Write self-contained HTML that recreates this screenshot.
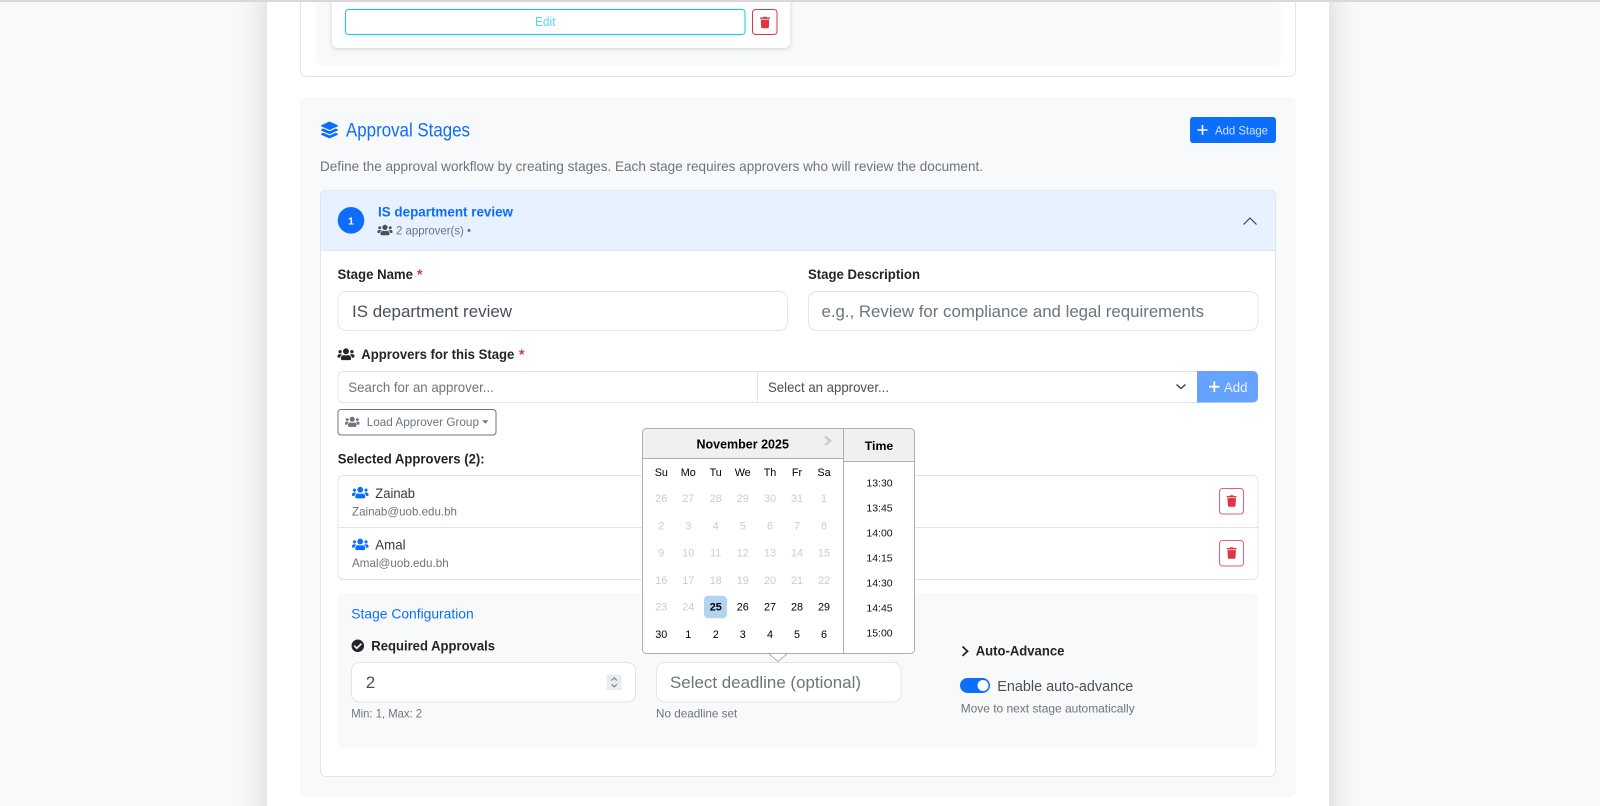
<!DOCTYPE html>
<html lang="en">
<head>
<meta charset="utf-8">
<title>Approval Stages</title>
<style>
html,body{margin:0;padding:0;width:1600px;height:806px;overflow:hidden;background:#f8f9fa}
#wrap{position:relative;width:1600px;height:806px;overflow:hidden;background:#f8f9fa}
#topline{position:absolute;left:0;top:0;width:1600px;height:1.5px;background:#d8d8d8;z-index:3}
#main{position:absolute;left:267px;top:-20px;width:1062px;height:860px;background:#fff;box-shadow:0 0 30px rgba(0,0,0,.16)}
svg#page{position:absolute;left:0;top:0;z-index:2;filter:blur(.3px)}
text{font-family:"Liberation Sans",sans-serif}
.b{font-weight:700}
.c{text-anchor:middle}
.g{fill:#6c757d}
.d{fill:#212529}
.m{fill:#495057}
.day{font-size:10.8px;fill:#000;text-anchor:middle}
.off{font-size:10.8px;fill:#ccc;text-anchor:middle}
.tm{font-size:10.5px;fill:#111;text-anchor:middle}
</style>
</head>
<body>
<div id="wrap">
<div id="main"></div>
<div id="topline"></div>
<svg id="page" width="1600" height="806" viewBox="0 0 1600 806" xmlns="http://www.w3.org/2000/svg">
<defs>
<symbol id="users" viewBox="0 0 640 512"><path fill="currentColor" d="M96 224c35.3 0 64-28.7 64-64s-28.7-64-64-64-64 28.7-64 64 28.7 64 64 64zm448 0c35.3 0 64-28.7 64-64s-28.7-64-64-64-64 28.7-64 64 28.7 64 64 64zm32 32h-64c-17.6 0-33.5 7.1-45.1 18.6 40.3 22.1 68.9 62 75.1 109.4h66c17.7 0 32-14.3 32-32v-32c0-35.3-28.7-64-64-64zm-256 0c61.9 0 112-50.1 112-112S381.9 32 320 32 208 82.1 208 144s50.1 112 112 112zm76.8 32h-8.3c-20.8 10-43.9 16-68.5 16s-47.6-6-68.5-16h-8.3C179.6 288 128 339.6 128 403.2V432c0 26.5 21.5 48 48 48h288c26.5 0 48-21.5 48-48v-28.8c0-63.6-51.6-115.2-115.2-115.2zm-223.7-13.4C161.5 263.1 145.6 256 128 256H64c-35.3 0-64 28.7-64 64v32c0 17.7 14.3 32 32 32h65.9c6.3-47.4 34.9-87.3 75.2-109.4z"/></symbol>
<symbol id="layers" viewBox="0 0 512 512"><path fill="currentColor" d="M12.41 148.02l232.94 105.67c6.8 3.09 14.49 3.09 21.29 0l232.94-105.67c16.55-7.51 16.55-32.52 0-40.03L266.65 2.31a25.607 25.607 0 0 0-21.29 0L12.41 107.98c-16.55 7.51-16.55 32.53 0 40.04zm487.18 88.28l-58.09-26.33-161.64 73.27c-7.56 3.43-15.59 5.17-23.86 5.17s-16.29-1.74-23.86-5.17L70.51 209.97l-58.1 26.33c-16.55 7.5-16.55 32.5 0 40l232.94 105.59c6.8 3.08 14.49 3.08 21.29 0L499.59 276.3c16.55-7.5 16.55-32.5 0-40zm0 127.8l-57.87-26.23-161.86 73.37c-7.56 3.43-15.59 5.17-23.86 5.17s-16.29-1.74-23.86-5.17L70.29 337.87 12.41 364.1c-16.55 7.5-16.55 32.5 0 40l232.94 105.59c6.8 3.08 14.49 3.08 21.29 0L499.59 404.1c16.55-7.5 16.55-32.5 0-40z"/></symbol>
<symbol id="trash" viewBox="0 0 448 512"><path fill="currentColor" d="M432 32H312l-9.4-18.7A24 24 0 0 0 281.1 0H166.8a23.72 23.72 0 0 0-21.4 13.3L136 32H16A16 16 0 0 0 0 48v32a16 16 0 0 0 16 16h416a16 16 0 0 0 16-16V48a16 16 0 0 0-16-16zM53.2 467a48 48 0 0 0 47.9 45h245.8a48 48 0 0 0 47.9-45L416 128H32z"/></symbol>
<symbol id="check" viewBox="0 0 512 512"><path fill="currentColor" d="M504 256c0 136.967-111.033 248-248 248S8 392.967 8 256 119.033 8 256 8s248 111.033 248 248zM227.314 387.314l184-184c6.248-6.248 6.248-16.379 0-22.627l-22.627-22.627c-6.248-6.249-16.379-6.249-22.628 0L216 308.118l-70.059-70.059c-6.248-6.248-16.379-6.248-22.628 0l-22.627 22.627c-6.248 6.248-6.248 16.379 0 22.627l104 104c6.249 6.249 16.379 6.249 22.628 0z"/></symbol>
</defs>

<!-- top card remnants -->
<rect x="300.5" y="-20" width="995" height="96.5" rx="6" fill="#fff" stroke="#e2e5e8"/>
<rect x="317" y="-20" width="962" height="83" rx="6" fill="#f8f9fa" style="filter:drop-shadow(0 1px 2px rgba(0,0,0,.05))"/>
<rect x="332" y="-20" width="458" height="68" rx="6" fill="#fff" style="filter:drop-shadow(0 1px 2.5px rgba(0,0,0,.16))"/>
<rect x="345.5" y="9.5" width="399.5" height="25" rx="3" fill="#fff" stroke="#0dcaf0"/>
<text x="535" y="26" font-size="12.5" fill="#5ad6f2" textLength="20.5" lengthAdjust="spacingAndGlyphs">Edit</text>
<rect x="752.5" y="9.5" width="24.5" height="25" rx="3" fill="#fff" stroke="#dc3545"/>
<use href="#trash" x="760" y="16.5" width="10" height="12" color="#dc3545"/>

<!-- approval section -->
<rect x="300" y="97" width="996" height="700" rx="6" fill="#f8f9fa"/>
<use href="#layers" x="321" y="121.5" width="17" height="17" color="#0d6efd"/>
<text x="346" y="136.5" font-size="19" fill="#0d6efd" textLength="124" lengthAdjust="spacingAndGlyphs">Approval Stages</text>
<rect x="1190" y="117" width="86" height="26" rx="3" fill="#0d6efd"/>
<path d="M1197.500 130h10M1202.500 125v10" stroke="#fff" stroke-width="1.600" fill="none"/>
<text x="1215" y="134.300" font-size="12" fill="#cfe2ff" textLength="53" lengthAdjust="spacingAndGlyphs">Add Stage</text>
<text x="320" y="171" font-size="14" class="g" textLength="663" lengthAdjust="spacingAndGlyphs">Define the approval workflow by creating stages. Each stage requires approvers who will review the document.</text>

<!-- accordion card -->
<rect x="320.500" y="190.500" width="955" height="586" rx="5" fill="#fff" stroke="#e2e5e8"/>
<path d="M321 250V195a4.500 4.500 0 0 1 4.500-4.500H1270.500a4.500 4.500 0 0 1 4.500 4.500V250z" fill="#e7f1ff"/>
<path d="M320.500 250.500H1275.500" stroke="#e2e5e8"/>
<circle cx="351" cy="220.300" r="13.300" fill="#0d6efd"/>
<text x="351" y="224.300" font-size="10.500" fill="#fff" class="b c">1</text>
<text x="378" y="216.300" font-size="14" fill="#0d6efd" class="b" textLength="135" lengthAdjust="spacingAndGlyphs">IS department review</text>
<use href="#users" x="377.500" y="224" width="15" height="12" color="#495057"/>
<text x="396" y="234.300" font-size="12" class="g" textLength="75" lengthAdjust="spacingAndGlyphs">2 approver(s) •</text>
<path d="M1243.500 224.500L1250 218l6.500 6.500" stroke="#1f3a68" stroke-width="1.100" fill="none"/>

<!-- stage name / description -->
<text x="337.500" y="279" font-size="14" class="b d" textLength="75.500" lengthAdjust="spacingAndGlyphs">Stage Name</text>
<text x="417" y="279" font-size="14" fill="#dc3545" class="b">*</text>
<rect x="338" y="291.500" width="449.500" height="39" rx="8" fill="#fff" stroke="#e2e5e8"/>
<text x="352" y="317" font-size="17" class="m" textLength="160" lengthAdjust="spacingAndGlyphs">IS department review</text>
<text x="808" y="279" font-size="14" class="b d" textLength="112" lengthAdjust="spacingAndGlyphs">Stage Description</text>
<rect x="808.500" y="291.500" width="449.500" height="39" rx="8" fill="#fff" stroke="#e2e5e8"/>
<text x="821.500" y="317" font-size="17" class="g" textLength="382.500" lengthAdjust="spacingAndGlyphs">e.g., Review for compliance and legal requirements</text>

<!-- approvers -->
<use href="#users" x="337.500" y="347.500" width="17" height="13.500" color="#212529"/>
<text x="361.300" y="359" font-size="14" class="b d" textLength="153" lengthAdjust="spacingAndGlyphs">Approvers for this Stage</text>
<text x="519" y="359" font-size="14" fill="#dc3545" class="b">*</text>
<rect x="338" y="371.500" width="880" height="31" rx="5" fill="#fff" stroke="#e2e5e8"/>
<path d="M757.500 371.500V402.500" stroke="#e2e5e8"/>
<text x="348.300" y="392" font-size="14" class="g" textLength="145.500" lengthAdjust="spacingAndGlyphs">Search for an approver...</text>
<text x="768" y="392" font-size="14" class="m" textLength="121" lengthAdjust="spacingAndGlyphs">Select an approver...</text>
<path d="M1176.500 384.500l4.500 4 4.500-4" stroke="#343a40" stroke-width="1.300" fill="none"/>
<path d="M1197 371h56a5 5 0 0 1 5 5v21.500a5 5 0 0 1-5 5h-56z" fill="#66a3ff"/>
<path d="M1209 386.700h10.500M1214.300 381.500v10.500" stroke="#fff" stroke-width="1.800" fill="none"/>
<text x="1224" y="392" font-size="14" fill="#e8f1ff" textLength="23.500" lengthAdjust="spacingAndGlyphs">Add</text>

<rect x="338" y="409.500" width="158" height="25.500" rx="3" fill="#fff" stroke="#6c757d"/>
<use href="#users" x="345" y="416" width="14.500" height="11.600" color="#6c757d"/>
<text x="366.700" y="426" font-size="12" class="g" textLength="112.300" lengthAdjust="spacingAndGlyphs">Load Approver Group</text>
<path d="M482.300 420.300h6l-3 3.400z" fill="#6c757d"/>

<text x="337.700" y="463.500" font-size="14" class="b d" textLength="147" lengthAdjust="spacingAndGlyphs">Selected Approvers (2):</text>

<!-- list -->
<rect x="338" y="475.500" width="920" height="104" rx="5" fill="#fff" stroke="#e2e5e8"/>
<path d="M338 527.500H1258" stroke="#e2e5e8"/>
<use href="#users" x="352" y="486" width="16.500" height="13.300" color="#0d6efd"/>
<text x="375.300" y="498" font-size="14" fill="#343a40" textLength="39.700" lengthAdjust="spacingAndGlyphs">Zainab</text>
<text x="352" y="515.300" font-size="12" class="g" textLength="105" lengthAdjust="spacingAndGlyphs">Zainab@uob.edu.bh</text>
<use href="#users" x="352" y="537.700" width="16.500" height="13.300" color="#0d6efd"/>
<text x="375.300" y="549.700" font-size="14" fill="#343a40" textLength="30.300" lengthAdjust="spacingAndGlyphs">Amal</text>
<text x="352" y="567" font-size="12" class="g" textLength="96.700" lengthAdjust="spacingAndGlyphs">Amal@uob.edu.bh</text>
<rect x="1219.500" y="488.500" width="24" height="25.500" rx="3" fill="#fff" stroke="#e4606d"/>
<use href="#trash" x="1226.700" y="495" width="10" height="12" color="#dc3545"/>
<rect x="1219.500" y="540.500" width="24" height="25.500" rx="3" fill="#fff" stroke="#e4606d"/>
<use href="#trash" x="1226.700" y="547" width="10" height="12" color="#dc3545"/>

<!-- configuration -->
<rect x="337.500" y="593.500" width="920.500" height="155" rx="5" fill="#f8f9fa"/>
<text x="351.300" y="618.700" font-size="14" fill="#0d6efd" textLength="122.400" lengthAdjust="spacingAndGlyphs">Stage Configuration</text>
<use href="#check" x="351.300" y="639.300" width="13" height="13" color="#212529"/>
<text x="371.300" y="650.700" font-size="14" class="b d" textLength="123.700" lengthAdjust="spacingAndGlyphs">Required Approvals</text>
<rect x="351.500" y="662.500" width="284" height="39.500" rx="8" fill="#fff" stroke="#e2e5e8"/>
<text x="365.700" y="688" font-size="17" class="m">2</text>
<rect x="606.700" y="674.700" width="15" height="15.300" fill="#e9ecef"/>
<path d="M611.500 680.500l2.700-2.700 2.700 2.700M611.500 684.200l2.700 2.700 2.700-2.700" stroke="#6c757d" fill="none"/>
<text x="351.300" y="717.700" font-size="12" class="g" textLength="70.700" lengthAdjust="spacingAndGlyphs">Min: 1, Max: 2</text>
<rect x="656.500" y="662.500" width="244.500" height="39.500" rx="8" fill="#fff" stroke="#e2e5e8"/>
<text x="670" y="688" font-size="17" class="g" textLength="191" lengthAdjust="spacingAndGlyphs">Select deadline (optional)</text>
<text x="656" y="717.700" font-size="12" class="g" textLength="81.300" lengthAdjust="spacingAndGlyphs">No deadline set</text>
<path d="M962.500 646.500l5 4.700-5 4.700" stroke="#212529" stroke-width="1.800" fill="none"/>
<text x="975.700" y="655.300" font-size="14" class="b d" textLength="88.700" lengthAdjust="spacingAndGlyphs">Auto-Advance</text>
<rect x="960" y="678" width="30" height="15" rx="7.500" fill="#0d6efd"/>
<circle cx="983" cy="685.500" r="5.500" fill="#fff"/>
<text x="997.300" y="691" font-size="14.500" class="m" textLength="136" lengthAdjust="spacingAndGlyphs">Enable auto-advance</text>
<text x="960.700" y="712.300" font-size="12" class="g" textLength="174" lengthAdjust="spacingAndGlyphs">Move to next stage automatically</text>

<!-- datepicker -->
<path d="M768.500 653.500L778 661.500L787.500 653.500" fill="#fff" stroke="#aeaeae"/>
<rect x="642.500" y="428.500" width="272" height="225" rx="4" fill="#fff" stroke="#aeaeae"/>
<path d="M643 458V433a4 4 0 0 1 4-4H843v29z" fill="#f0f0f0"/>
<path d="M844 461V429h66a4 4 0 0 1 4 4v28z" fill="#f0f0f0"/>
<path d="M643 458.500H843M844 461.500H914" stroke="#aeaeae"/>
<path d="M843.500 429V653" stroke="#aeaeae"/>
<path d="M825 436.500l5 4.300-5 4.300" stroke="#ccc" stroke-width="2.500" fill="none"/>
<text x="742.700" y="448.500" font-size="12.500" fill="#000" class="b c">November 2025</text>
<text x="879" y="450" font-size="12.300" fill="#000" class="b c">Time</text>

<text class="day" x="661.300" y="476">Su</text><text class="day" x="688.300" y="476">Mo</text><text class="day" x="715.700" y="476">Tu</text><text class="day" x="742.700" y="476">We</text><text class="day" x="770" y="476">Th</text><text class="day" x="797" y="476">Fr</text><text class="day" x="824" y="476">Sa</text>

<text class="off" x="661.300" y="502">26</text><text class="off" x="688.300" y="502">27</text><text class="off" x="715.700" y="502">28</text><text class="off" x="742.700" y="502">29</text><text class="off" x="770" y="502">30</text><text class="off" x="797" y="502">31</text><text class="off" x="824" y="502">1</text>

<text class="off" x="661.300" y="529.700">2</text><text class="off" x="688.300" y="529.700">3</text><text class="off" x="715.700" y="529.700">4</text><text class="off" x="742.700" y="529.700">5</text><text class="off" x="770" y="529.700">6</text><text class="off" x="797" y="529.700">7</text><text class="off" x="824" y="529.700">8</text>

<text class="off" x="661.300" y="556.700">9</text><text class="off" x="688.300" y="556.700">10</text><text class="off" x="715.700" y="556.700">11</text><text class="off" x="742.700" y="556.700">12</text><text class="off" x="770" y="556.700">13</text><text class="off" x="797" y="556.700">14</text><text class="off" x="824" y="556.700">15</text>

<text class="off" x="661.300" y="584">16</text><text class="off" x="688.300" y="584">17</text><text class="off" x="715.700" y="584">18</text><text class="off" x="742.700" y="584">19</text><text class="off" x="770" y="584">20</text><text class="off" x="797" y="584">21</text><text class="off" x="824" y="584">22</text>

<rect x="704" y="595.700" width="23" height="22.500" rx="4" fill="#b3d4f0"/>
<text class="off" x="661.300" y="610.700">23</text><text class="off" x="688.300" y="610.700">24</text><text class="day b" x="715.700" y="610.700">25</text><text class="day" x="742.700" y="610.700">26</text><text class="day" x="770" y="610.700">27</text><text class="day" x="797" y="610.700">28</text><text class="day" x="824" y="610.700">29</text>

<text class="day" x="661.300" y="638">30</text><text class="day" x="688.300" y="638">1</text><text class="day" x="715.700" y="638">2</text><text class="day" x="742.700" y="638">3</text><text class="day" x="770" y="638">4</text><text class="day" x="797" y="638">5</text><text class="day" x="824" y="638">6</text>

<text class="tm" x="879.500" y="486.300">13:30</text>
<text class="tm" x="879.500" y="511.300">13:45</text>
<text class="tm" x="879.500" y="536.300">14:00</text>
<text class="tm" x="879.500" y="561.300">14:15</text>
<text class="tm" x="879.500" y="586.300">14:30</text>
<text class="tm" x="879.500" y="611.300">14:45</text>
<text class="tm" x="879.500" y="636.300">15:00</text>
</svg>
</div>
</body>
</html>
